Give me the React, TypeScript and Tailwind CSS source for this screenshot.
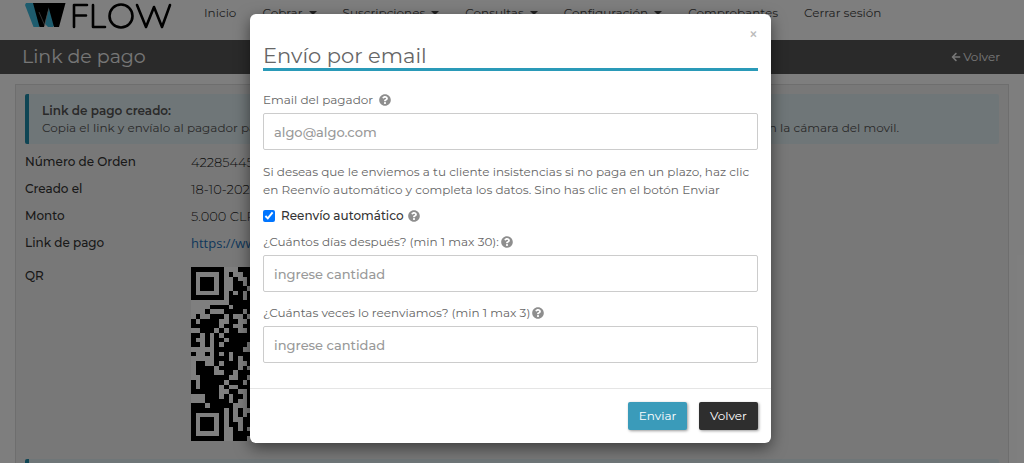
import React, { useState } from 'react';
import { FaArrowLeft, FaQuestionCircle } from 'react-icons/fa';

const menu = [
  { label: 'Inicio', dropdown: false },
  { label: 'Cobrar', dropdown: true },
  { label: 'Suscripciones', dropdown: true },
  { label: 'Consultas', dropdown: true },
  { label: 'Configuración', dropdown: true },
  { label: 'Comprobantes', dropdown: false },
  { label: 'Cerrar sesión', dropdown: false },
];

// Left columns of the QR code, one string per row
const qrRows = [
  '#######...###',
  '#.....#.#..##',
  '#.###.#..#..#',
  '#.###.#..##.#',
  '#.###.#..###.',
  '#.....#.#.#.#',
  '#######.###.#',
  '........#####',
  '....####.####',
  '...#...####.#',
  '.#..###.#..#.',
  '#.####..##..#',
  '######.##..##',
  '..###.#.##..#',
  '##.#.#.######',
  '#..#.##.#####',
  '##.#.#.#####.',
  '.....######..',
  '#..#.#.#.####',
  '.....###.#.##',
  '.##..#.###..#',
  '.####.####.#.',
  '.####..##.###',
  '..######..##.',
  '#.#####.###.#',
  '#.####.#..###',
  '######..##..#',
  '...###.#.##.#',
  '...#####.#..#',
  '###.#####...#',
  '#######.#.#..',
  '#.....#.#.#.#',
  '#.###.#.#..##',
  '#.###.#.##.##',
  '#.###.#..#.#.',
  '#.....#..####',
  '#######..###.',
];

function Logo() {
  return (
    <svg viewBox="0 0 148 28" className="h-7 w-[148px]" fill="none" aria-label="Flow" role="img">
      <path d="M2 1h8l7 20-2 4H9.500L1 3Z" fill="#3cb9dc" />
      <path d="m25 5 6 17-2 3h-5l-3-3Z" fill="#3cb9dc" />
      <path d="M9 1h16v4l-5 20h-4.500Z" fill="#000" />
      <path d="M25 1h16.500L35 25h-5L24.500 5Z" fill="#000" />
      <path d="m15 10 6 14M20.500 23 24.500 8" stroke="#8a8a8a" strokeWidth="0.700" />
      <g stroke="#000" strokeWidth="2.600" strokeLinecap="round" strokeLinejoin="round">
        <path d="M63 3H50v22M50 13.500h12M69 3v22h12" />
        <circle cx="97" cy="14" r="11.500" />
        <path d="m113 3 9 22 8-20 8 20 8-22" />
      </g>
    </svg>
  );
}

function QrCode() {
  return (
    <svg viewBox="0 0 13 37" className="h-[174px] w-[61px]" shapeRendering="crispEdges" aria-label="QR" role="img">
      <rect width="13" height="37" fill="#fff" />
      {qrRows.map((row, y) =>
        row.split('').map((cell, x) =>
          cell === '#' ? <rect key={`${x}-${y}`} x={x} y={y} width="1" height="1" fill="#000" /> : null
        )
      )}
    </svg>
  );
}

function Help() {
  return <FaQuestionCircle className="inline-block size-3 text-[#8e8e8e]" aria-hidden="true" />;
}

interface FieldProps {
  id: string;
  label: string;
  placeholder: string;
  type?: string;
  spaced?: boolean;
}

function Field({ id, label, placeholder, type = 'text', spaced = false }: FieldProps) {
  return (
    <div>
      <label htmlFor={id} className={`flex h-[18px] items-center ${spaced ? 'gap-1.5' : 'gap-0.5'}`}>
        {label}
        <Help />
      </label>
      <input
        id={id}
        type={type}
        placeholder={placeholder}
        className="mt-1 block h-[37px] w-full rounded-xs border border-[#ccc] px-2.5 text-[13px] font-medium text-[#555] placeholder:text-[#999]"
      />
    </div>
  );
}

function EmailModal() {
  const [resend, setResend] = useState(true);

  return (
    <div className="absolute inset-0 bg-black/50 pr-[3px]">
      <div
        role="dialog"
        aria-labelledby="modal-title"
        className="mx-auto mt-3.5 w-[521px] max-w-full rounded-md bg-white text-[#666] shadow-[0_5px_15px_rgba(0,0,0,0.5)]"
      >
        <div className="flex flex-col px-[13px] pt-3">
          <button type="button" aria-label="Cerrar" className="self-end text-base leading-[18px] font-medium text-[#bbb]">
            ×
          </button>
          <h2 id="modal-title" className="border-b-3 border-[#2a9ab8] text-[21px] leading-6">
            Envío por email
          </h2>
        </div>
        <form className="mt-5">
          <div className="px-[13px]">
            <Field id="email" label="Email del pagador" placeholder="algo@algo.com" type="email" spaced />
            <p className="mt-[13px]">
              Si deseas que le enviemos a tu cliente insistencias si no paga en un plazo, haz clic en Reenvío
              automático y completa los datos. Sino has clic en el botón Enviar
            </p>
            <div className="mt-2 mb-2 flex h-[18px] items-center">
              <input
                id="resend"
                type="checkbox"
                checked={resend}
                onChange={(e) => setResend(e.target.checked)}
                className="size-3"
              />
              <label htmlFor="resend" className="ml-1.5 flex items-center gap-1 font-medium text-[#333]">
                Reenvío automático
                <Help />
              </label>
            </div>
            <div className="space-y-3">
              <Field id="days" label="¿Cuántos días después? (min 1 max 30):" placeholder="ingrese cantidad" />
              <Field id="times" label="¿Cuántas veces lo reenviamos? (min 1 max 3)" placeholder="ingrese cantidad" />
            </div>
          </div>
          <div className="mt-[25px] flex justify-end gap-3 border-t border-[#e5e5e5] p-[13px]">
            <button type="submit" className="h-7 w-[59px] rounded-xs bg-[#3a9bba] text-white shadow-[1px_1px_3px_rgba(0,0,0,0.4)]">
              Enviar
            </button>
            <button type="button" className="h-7 w-[59px] rounded-xs bg-[#2e2e2e] text-white shadow-[1px_1px_3px_rgba(0,0,0,0.4)]">
              Volver
            </button>
          </div>
        </form>
      </div>
    </div>
  );
}

export default function App() {
  return (
    <div className="relative h-screen overflow-hidden bg-[#fdfdfd] font-['Montserrat',sans-serif] text-[12px] leading-[18px] text-[#555]">
      <header className="flex h-10 items-start pl-6">
        <div className="w-[180px] pt-0.5">
          <Logo />
        </div>
        <nav className="flex gap-[26px] pt-1 text-[#444]">
          {menu.map((item) => (
            <a key={item.label} href="#" className="flex items-center gap-1.5 whitespace-nowrap">
              {item.label}
              {item.dropdown && <span className="border-x-4 border-t-4 border-x-transparent border-t-current" />}
            </a>
          ))}
        </nav>
      </header>
      <div className="flex h-[34px] items-center justify-between bg-[#555] pr-6 pl-[22px] text-[#eee]">
        <h1 className="text-[19px]">Link de pago</h1>
        <a href="#" className="flex items-center gap-0.5">
          <FaArrowLeft className="size-2.5" />
          Volver
        </a>
      </div>
      <main className="mx-[15px] mt-2.5 border border-[#dcdcdc] bg-[#f0f0f0] px-[9px] pt-[9px]">
        <div className="h-[50px] rounded-xs border-l-4 border-[#1f8aa8] bg-[#dfecf0] px-[13px] pt-2">
          <p className="leading-[17px] font-semibold">Link de pago creado:</p>
          <div className="flex justify-between leading-[17px]">
            <p>Copia el link y envíalo al pagador para</p>
            <p className="pr-[87px]">con la cámara del movil.</p>
          </div>
        </div>
        <dl className="mt-[9px] grid grid-cols-[166px_1fr] gap-y-[9px]">
          <dt className="font-medium text-[#333]">Número de Orden</dt>
          <dd className="text-[13px] leading-[18px] font-light text-[#222]">42285445</dd>
          <dt className="font-medium text-[#333]">Creado el</dt>
          <dd className="text-[13px] leading-[18px] font-light text-[#222]">18-10-2021</dd>
          <dt className="font-medium text-[#333]">Monto</dt>
          <dd className="text-[13px] leading-[18px] font-light text-[#222]">5.000 CLP</dd>
          <dt className="font-medium text-[#333]">Link de pago</dt>
          <dd className="font-['Open_Sans',sans-serif] text-[13px] leading-[18px]">
            <a href="#" className="text-[#1f70b8]">https://www</a>
          </dd>
          <dt className="mt-1.5 font-medium text-[#333]">QR</dt>
          <dd className="mt-1.5">
            <QrCode />
          </dd>
        </dl>
        <div className="mt-[18px] h-[50px] rounded-xs border-l-4 border-[#1f8aa8] bg-[#dfecf0]" />
      </main>
      <EmailModal />
    </div>
  );
}
